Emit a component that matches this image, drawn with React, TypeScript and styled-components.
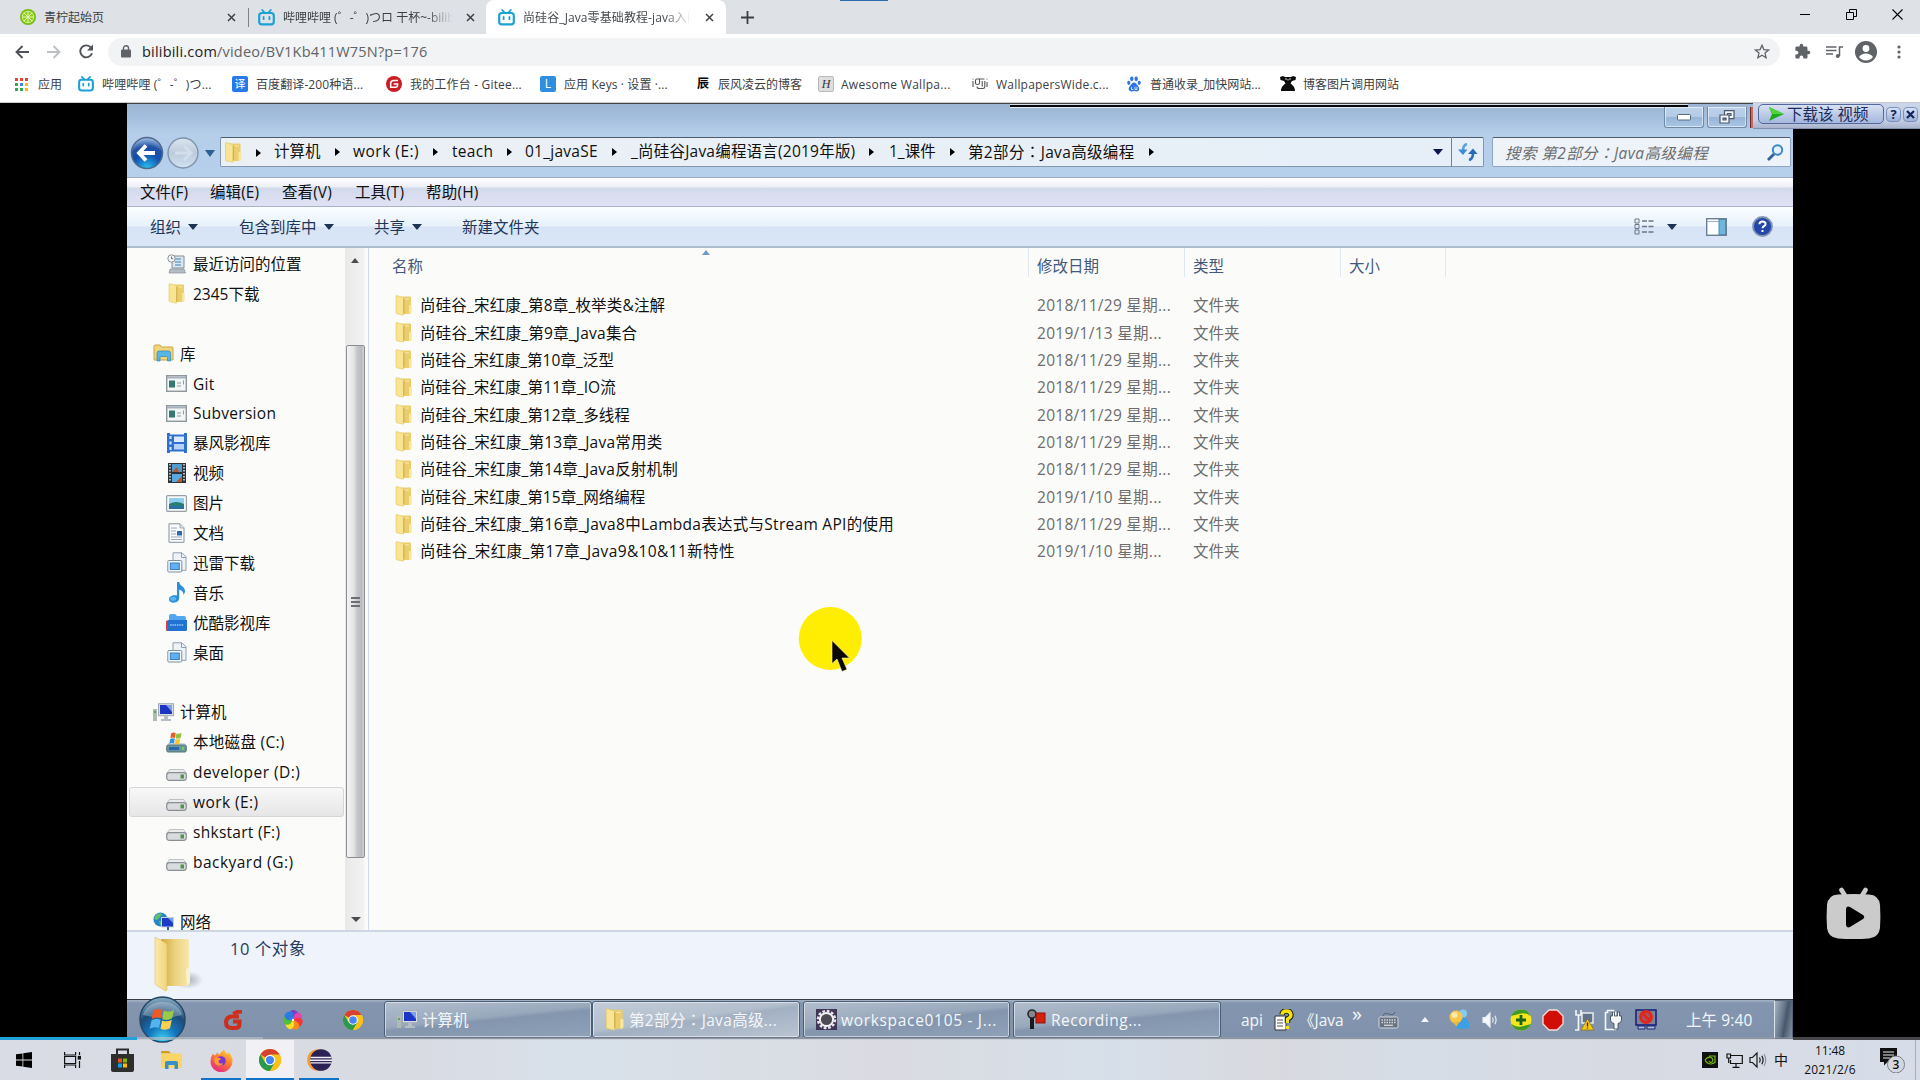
import React from "react";
import styled, { createGlobalStyle, css } from "styled-components";

const GlobalStyle = createGlobalStyle`
  * { box-sizing: border-box; }
  html, body { margin: 0; padding: 0; background: #000; overflow: hidden; }
  body { font-family: "Open Sans", "Noto Sans CJK SC", sans-serif; }
  svg { display: block; flex: none; }
`;

const Screen = styled.div`
  width: 1920px;
  height: 1080px;
  display: flex;
  flex-direction: column;
  overflow: hidden;
  background: #000;
`;

/* ---------- shared text cell ---------- */

const Cell = styled.span<{ w?: number; ls?: number }>`
  display: block;
  flex: none;
  white-space: nowrap;
  ${(p) => p.w !== undefined && css`width: ${p.w}px;`}
  letter-spacing: ${(p) => p.ls ?? 0}px;
`;

const IconCell = styled.span<{ w: number }>`
  display: flex;
  flex: none;
  align-items: center;
  width: ${(p) => p.w}px;
`;

/* the traditional face centres the full-width colon in its box */
const MidColon = styled.span`
  font-family: "Noto Sans CJK TC", sans-serif;
`;

const withColon = (s: string) => {
  const [a, b] = s.split("：");
  return b === undefined ? s : <span>{a}<MidColon lang="zh-TW">：</MidColon>{b}</span>;
};

/* ---------- browser chrome ---------- */

const TabStrip = styled.div`
  height: 34px;
  display: flex;
  background: #dee1e6;
  position: relative;
  flex: none;
`;

const TopMark = styled.div`
  position: absolute;
  left: 840px;
  top: 0;
  width: 48px;
  height: 1px;
  background: #2b6cb0;
`;

const Tab = styled.div<{ w: number; pad: number; active?: boolean; line?: boolean }>`
  width: ${(p) => p.w}px;
  height: 34px;
  padding-left: ${(p) => p.pad}px;
  display: flex;
  align-items: center;
  flex: none;
  font-size: 12px;
  color: #3c4043;
  position: relative;
  padding-bottom: 0;
  ${(p) =>
    p.active &&
    css`
      background: #fff;
      border-radius: 8px 8px 0 0;
      color: #45494d;
    `}
  ${(p) =>
    p.line &&
    css`
      &::after {
        content: "";
        position: absolute;
        right: 0;
        top: 8px;
        width: 1px;
        height: 19px;
        background: #808387;
      }
    `}
`;

const TabTitle = styled.div<{ fade?: boolean; w: number; ls?: number }>`
  width: ${(p) => p.w}px;
  margin-left: 8px;
  overflow: hidden;
  white-space: nowrap;
  letter-spacing: ${(p) => p.ls ?? 0}px;
  ${(p) =>
    p.fade &&
    css`
      mask-image: linear-gradient(90deg, #000 82%, transparent 97%);
    `}
`;

const NewTab = styled.div`
  width: 40px;
  padding-left: 15px;
  display: flex;
  align-items: center;
`;

const WindowButtons = styled.div`
  margin-left: auto;
  display: flex;
  height: 28px;
  align-items: center;
`;

const WinBtn = styled.div`
  width: 46px;
  display: flex;
  justify-content: center;
`;

const NavBar = styled.div`
  height: 35px;
  flex: none;
  display: flex;
  align-items: center;
  background: #fff;
`;

const NavIcon = styled.div<{ w: number }>`
  width: ${(p) => p.w}px;
  display: flex;
  justify-content: center;
`;

const Omnibox = styled.div`
  width: 1672px;
  height: 28px;
  border-radius: 14px;
  background: #f1f3f4;
  display: flex;
  align-items: center;
  padding: 0 10px 0 13px;
  font-size: 14.5px;
  color: #5f6368;
  letter-spacing: 0.2px;
`;

const Host = styled.b`
  font-weight: 400;
  color: #202124;
`;

const Url = styled.div`
  margin-left: 11px;
  flex: 1;
`;

const Bookmarks = styled.div`
  height: 34px;
  flex: none;
  display: flex;
  align-items: center;
  background: #fff;
  padding: 0 0 3px 15px;
  border-bottom: 1px solid #c9cbce;
  font-size: 12px;
  color: #3c4043;
`;

const Bookmark = styled.div<{ w: number; gap: number; ls?: number }>`
  width: ${(p) => p.w}px;
  flex: none;
  display: flex;
  align-items: center;
  gap: ${(p) => p.gap}px;
  white-space: nowrap;
  letter-spacing: ${(p) => p.ls ?? 0}px;
`;

const Tile = styled.span<{ bg: string; fg?: string; round?: boolean; size?: number; serif?: boolean }>`
  width: 16px;
  height: 16px;
  flex: none;
  display: flex;
  align-items: center;
  justify-content: center;
  background: ${(p) => p.bg};
  color: ${(p) => p.fg ?? "#fff"};
  border-radius: ${(p) => (p.round ? 8 : 2)}px;
  font-size: ${(p) => p.size ?? 11}px;
  line-height: 16px;
  letter-spacing: 0;
  ${(p) => p.serif && css`font-family: "Liberation Serif", serif; font-style: italic; border: 1px solid #bbb;`}
`;

/* ---------- video stage ---------- */

const Stage = styled.div`
  height: 937px;
  flex: none;
  padding-left: 127px;
  background: #000;
  position: relative;
`;

const Desktop = styled.div`
  width: 1666px;
  height: 937px;
  display: flex;
  flex-direction: column;
  font-size: 15.5px;
  line-height: 24px;
  color: #101010;
  background: #fbfcfa;
`;

const TitleArea = styled.div`
  height: 74px;
  flex: none;
  border-top: 1px solid #444;
  background: linear-gradient(180deg, #9db5d2 0, #a2bcdc 12px, #b5cfea 30px, #b6cfea 100%);
  position: relative;
  display: flex;
  align-items: flex-start;
  padding: 33px 2px 0 3px;
`;

const AddressBox = styled.div`
  width: 1264px;
  height: 30px;
  border: 1px solid #8296ad;
  border-top-color: #4f5c6b;
  border-radius: 2px;
  background: linear-gradient(90deg, #ebf0f5, #e6eff8);
  display: flex;
  align-items: center;
  padding-left: 4px;
`;

const NavButtons = styled.div`
  width: 90px;
  height: 32px;
  display: flex;
  align-items: center;
`;

const Crumb = styled.div<{ w: number; ls?: number }>`
  width: ${(p) => p.w}px;
  flex: none;
  display: flex;
  align-items: center;
  gap: 14px;
  white-space: nowrap;
  letter-spacing: ${(p) => p.ls ?? 0}px;
  padding-bottom: 2px;
`;

const CrumbArrow = styled.i`
  flex: none;
  border-left: 5px solid #000;
  border-top: 4.5px solid transparent;
  border-bottom: 4.5px solid transparent;
  position: relative;
  top: 1px;
`;

const Down = styled.i<{ c?: string; s?: number }>`
  flex: none;
  display: block;
  border-top: ${(p) => p.s ?? 6}px solid ${(p) => p.c ?? "#1c3452"};
  border-left: 5px solid transparent;
  border-right: 5px solid transparent;
`;

const Up = styled.i<{ c: string }>`
  display: block;
  border-bottom: 5px solid ${(p) => p.c};
  border-left: 4.5px solid transparent;
  border-right: 4.5px solid transparent;
`;

const RefreshBox = styled.div`
  width: 34px;
  height: 30px;
  border-left: 1px solid #6f8297;
  display: flex;
  align-items: center;
  justify-content: center;
  margin-left: 8px;
`;

const SearchBox = styled.div`
  width: 299px;
  height: 30px;
  margin-left: 8px;
  border: 1px solid #8ea6c0;
  border-top-color: #4f5c6b;
  border-radius: 2px;
  background: #edf3f8;
  display: flex;
  align-items: center;
  justify-content: space-between;
  padding: 0 6px 0 12px;
  color: #6a6d70;
  font-style: italic;
  letter-spacing: 0.42px;
`;

const CaptionButton = styled.div<{ x: number; w: number }>`
  position: absolute;
  left: ${(p) => p.x}px;
  top: 3px;
  width: ${(p) => p.w}px;
  height: 21px;
  border: 1px solid #6f89a8;
  border-top: none;
  border-radius: 0 0 3px 3px;
  box-shadow: inset 0 0 0 1px rgba(255, 255, 255, 0.55);
  background: linear-gradient(180deg, #bdd2ea 0, #b4cbe6 50%, #98b5d7 51%, #a9c6e6 100%);
  display: flex;
  align-items: center;
  justify-content: center;
`;

const RedEdge = styled.div`
  position: absolute;
  left: 1623px;
  top: 3px;
  width: 4px;
  height: 21px;
  background: #c9695f;
  border-left: 1px solid #6b2a26;
`;

const BlackStrip = styled.div`
  position: absolute;
  left: 883px;
  top: 0;
  width: 678px;
  height: 4px;
  background: #05070b;
  border-bottom: 1px solid #e8eef5;
  border-top: 1px solid #d5dde6;
`;

const MenuBar = styled.div`
  height: 30px;
  flex: none;
  display: flex;
  align-items: center;
  padding-left: 13px;
  border-top: 1px solid #98acc5;
  border-bottom: 1px solid #a9b3c6;
  background: linear-gradient(180deg, #fff 0, #eceff7 9px, #d3daeb 10px, #dfe2f4 100%);
`;

const ToolBar = styled.div`
  height: 41px;
  flex: none;
  display: flex;
  align-items: center;
  padding-left: 23px;
  border-bottom: 2px solid #adbdce;
  background: linear-gradient(180deg, #fbfeff 0, #e6f1fa 19px, #d7e4f5 20px, #dae6f6 100%);
  color: #1f3658;
`;

const ToolItem = styled.div<{ w: number }>`
  width: ${(p) => p.w}px;
  display: flex;
  align-items: center;
  gap: 7px;
`;

const Body = styled.div`
  height: 682px;
  flex: none;
  display: flex;
  overflow: hidden;
`;

const Tree = styled.div`
  width: 218px;
  flex: none;
  overflow: hidden;
  padding-top: 1px;
`;

const TreeRow = styled.div<{ level: number; selected?: boolean; ls?: number }>`
  height: 29.9px;
  margin: 0 1px 0 2px;
  padding-left: ${(p) => (p.level === 1 ? 23 : 36)}px;
  display: flex;
  align-items: center;
  gap: 6px;
  white-space: nowrap;
  border-radius: 3px;
  border: 1px solid transparent;
  letter-spacing: ${(p) => p.ls ?? 0}px;
  ${(p) =>
    p.selected &&
    css`
      border-color: #d5d6d8;
      background: linear-gradient(180deg, #f8f8f8, #e6e6e7);
    `}
`;

const TreeIcon = styled.span`
  width: 21px;
  display: flex;
  justify-content: center;
`;

const ScrollTrack = styled.div`
  width: 24px;
  flex: none;
  background: linear-gradient(90deg, #e9e9ea 0, #f2f2f2 19px, #fbfcfa 20px);
  border-right: 1px solid #cfdcee;
  display: flex;
  flex-direction: column;
  align-items: flex-start;
`;

const ScrollEnd = styled.div<{ h: number; top: number }>`
  height: ${(p) => p.h}px;
  padding: ${(p) => p.top}px 0 0 6px;
`;

const Thumb = styled.div`
  width: 19px;
  height: 513px;
  margin-left: 1px;
  border: 1px solid #8b8e92;
  border-radius: 2px;
  background: linear-gradient(90deg, #f4f4f4 0, #e3e3e4 40%, #c4c6c9 60%, #b9bbbf 85%, #d2d3d5 100%);
  display: flex;
  flex-direction: column;
  gap: 2px;
  align-items: center;
  justify-content: center;
`;

const Grip = styled.i`
  width: 9px;
  height: 2px;
  background: #6b6e72;
`;

const Files = styled.div`
  flex: 1;
  padding-left: 7px;
`;

const HeaderRow = styled.div`
  height: 43.5px;
  display: flex;
  color: #44597a;
  position: relative;
`;

const HeadCell = styled.div<{ w: number; pad: number; last?: boolean }>`
  width: ${(p) => p.w}px;
  height: 29px;
  flex: none;
  padding: 7px 0 0 ${(p) => p.pad}px;
  line-height: 22px;
  border-right: 1px solid #dfe8f2;
`;

const SortMark = styled.div`
  position: absolute;
  left: 326px;
  top: 2px;
`;

const FileRow = styled.div`
  height: 27.36px;
  display: flex;
  align-items: center;
  padding-left: 19px;
`;

const FileName = styled.div<{ ls: number }>`
  width: 617px;
  white-space: nowrap;
  letter-spacing: ${(p) => p.ls}px;
`;

const FileMeta = styled.div<{ w: number; ls?: number }>`
  width: ${(p) => p.w}px;
  color: #6d6d6d;
  white-space: nowrap;
  letter-spacing: ${(p) => p.ls ?? 0}px;
`;

const Details = styled.div`
  height: 69px;
  flex: none;
  border-top: 2px solid #cdd6e3;
  background: #eef3fc;
  display: flex;
  padding: 3px 0 0 26px;
  gap: 27px;
  color: #2b3d5c;
`;

const DetailsText = styled.div`
  padding-top: 2px;
  font-size: 16.5px;
  letter-spacing: 0.55px;
`;

const SevenBar = styled.div`
  height: 40px;
  flex: none;
  display: flex;
  align-items: center;
  border-top: 1px solid #333b45;
  background: linear-gradient(180deg, #a6b4c6 0, #8496af 3px, #8092ab 100%);
  color: #f4f7fa;
  position: relative;
`;

const QuickLaunch = styled.div`
  width: 257px;
  padding-left: 12px;
  display: flex;
  align-items: center;
`;

const TaskButton = styled.div<{ w: number; light?: boolean; gap?: number; ls?: number }>`
  width: ${(p) => p.w}px;
  height: 37px;
  flex: none;
  margin-right: ${(p) => p.gap ?? 0}px;
  letter-spacing: ${(p) => p.ls ?? 0}px;
  display: flex;
  align-items: center;
  gap: 4px;
  padding-left: 12px;
  white-space: nowrap;
  border: 1px solid #4d5f77;
  border-radius: 3px;
  box-shadow: inset 0 0 0 1px rgba(255, 255, 255, 0.5);
  background: ${(p) =>
    p.light
      ? "linear-gradient(172deg, #c3ccd8 0, #b3bfcd 45%, #a2b0c2 52%, #b9c4d1 100%)"
      : "linear-gradient(174deg, #b2becd 0, #98a8bc 45%, #8496ae 52%, #8fa1b9 100%)"};
`;

const Tray = styled.div`
  display: flex;
  align-items: center;
  padding-left: 20px;
  flex: 1;
`;

const ClippedLabel = styled(Cell)`
  overflow: hidden;
  text-indent: -7px;
`;

const Chevron = styled(Cell)`
  font-size: 20px;
  padding-bottom: 12px;
`;

const ShowDesktop = styled.div`
  width: 19px;
  height: 39px;
  margin-left: auto;
  border: 1px solid #55657a;
  border-left-color: #dbe2ea;
  background: linear-gradient(100deg, #a7b2bf 0, #65758a 45%, #47566a 60%, #8593a6 100%);
`;

const Spotlight = styled.div`
  position: absolute;
  left: 798px;
  top: 503px;
`;

const DownloadBar = styled.div`
  position: absolute;
  left: 1753px;
  top: 0;
  width: 167px;
  height: 26px;
  display: flex;
  align-items: center;
  gap: 2px;
  padding: 0 1px 3px 5px;
  background: linear-gradient(180deg, #ccd6ea 0, #c4cfe6 70%, #a9b4cc 100%);
  border-bottom: 1px solid #8390ac;
`;

const DownloadButton = styled.div`
  width: 126px;
  height: 20px;
  border: 1px solid #53689b;
  border-radius: 5px;
  display: flex;
  align-items: center;
  gap: 3px;
  padding-left: 10px;
  background: linear-gradient(180deg, #d8e1f2, #a5b7dd);
  color: #1d2c5e;
  font-size: 15.5px;
  line-height: 18px;
  white-space: nowrap;
`;

const MiniButton = styled.div`
  width: 15px;
  height: 15px;
  border-radius: 4px;
  background: linear-gradient(180deg, #d6e2f6, #9db1d8);
  border: 1px solid #7d90bb;
  display: flex;
  align-items: center;
  justify-content: center;
  color: #14235a;
  font-weight: 700;
  font-size: 13px;
  line-height: 13px;
`;

const BiliBadge = styled.div`
  position: absolute;
  left: 1826px;
  top: 784px;
`;

const Progress = styled.div`
  position: absolute;
  left: 0;
  bottom: 0;
  width: 1920px;
  height: 3px;
  display: flex;
  background: rgba(150, 155, 165, 0.45);
`;

const ProgressPart = styled.div<{ w: number; c: string }>`
  width: ${(p) => p.w}px;
  background: ${(p) => p.c};
`;

/* ---------- Windows 10 taskbar ---------- */

const TenBar = styled.div`
  height: 40px;
  flex: none;
  display: flex;
  background: linear-gradient(90deg, #dadce5 0, #d9dbe3 22%, #d8e1ea 30%, #dadbe1 46%, #d6dfe9 58%, #d9d9df 66%, #d5dde6 73%, #d8dae3 85%, #d6dde8 100%);
`;

const TenApp = styled.div<{ w: number; active?: boolean; gap?: number }>`
  width: ${(p) => p.w}px;
  height: 40px;
  display: flex;
  align-items: center;
  justify-content: center;
  margin-right: ${(p) => p.gap ?? 0}px;
  ${(p) => p.active && css`background: #f0f0f5;`}
`;

const Running = styled(TenApp)`
  border-bottom: 2px solid #1173c7;
  padding-top: 2px;
  margin-right: 5px;
`;

const TenTray = styled.div`
  margin-left: auto;
  display: flex;
  align-items: center;
  color: #111;
  font-size: 12px;
`;

const Clock = styled.div`
  width: 72px;
  margin: 0 14px 0 -5px;
  text-align: center;
  line-height: 19px;
`;

const DateLine = styled.div`
  letter-spacing: 0.2px;
`;

const TimeLine = styled.div`
  letter-spacing: -0.1px;
`;

const Notice = styled.div`
  width: 35px;
`;

const PeekLine = styled.div`
  width: 5px;
  height: 40px;
  border-left: 1px solid #a9adb6;
`;

const ImeLabel = styled.span`
  width: 25px;
  font-size: 14px;
  line-height: 20px;
`;

/* ---------- icons ---------- */

const Close = () => (
  <svg width="9" height="9" viewBox="0 0 9 9"><path d="M1 1l7 7M8 1L1 8" stroke="#3c4043" strokeWidth="1.5" /></svg>
);

const BiliTv = ({ size = 17 }: { size?: number }) => (
  <svg width={size} height={size} viewBox="0 0 17 17" fill="none" stroke="#1ca1d4">
    <rect x="1.2" y="4" width="14.6" height="11.4" rx="2.6" strokeWidth="2.2" />
    <path d="M4.2 1l2.4 2.6M12.8 1l-2.4 2.6" strokeWidth="1.8" strokeLinecap="round" />
    <path d="M5.6 8v2.2M11.4 8v2.2" strokeWidth="1.8" strokeLinecap="round" />
  </svg>
);

const Lime = () => (
  <svg width="16" height="16" viewBox="0 0 16 16">
    <circle cx="8" cy="8" r="8" fill="#73bd12" />
    <circle cx="8" cy="8" r="6.2" fill="#d7f08b" />
    <circle cx="8" cy="8" r="5.4" fill="#8ed01f" />
    <path d="M8 2v12M2 8h12M3.8 3.8l8.4 8.4M12.2 3.8l-8.4 8.4" stroke="#e6f8b4" strokeWidth="1" />
  </svg>
);

const Apps = () => (
  <svg width="13" height="13" viewBox="0 0 13 13">
    {["#ea4335", "#ea4335", "#ea4335", "#34a853", "#4285f4", "#fbbc05", "#34a853", "#34a853", "#fbbc05"].map((c, i) => (
      <rect key={i} x={(i % 3) * 5} y={Math.floor(i / 3) * 5} width="3" height="3" fill={c} />
    ))}
  </svg>
);

const Gitee = () => (
  <svg width="16" height="16" viewBox="0 0 16 16">
    <circle cx="8" cy="8" r="8" fill="#c71d23" />
    <path d="M12 4.6H7.4a2.7 2.7 0 0 0-2.7 2.7v4h4.6a2.3 2.3 0 0 0 2.3-2.3v-.9H7.6" fill="none" stroke="#fff" strokeWidth="1.5" />
  </svg>
);

const Paw = () => (
  <svg width="14" height="16" viewBox="0 0 14 16" fill="#2f74e0">
    <ellipse cx="4.8" cy="2.8" rx="1.7" ry="2.4" />
    <ellipse cx="9.2" cy="2.8" rx="1.7" ry="2.4" />
    <ellipse cx="1.8" cy="6.8" rx="1.6" ry="2.1" />
    <ellipse cx="12.2" cy="6.8" rx="1.6" ry="2.1" />
    <path d="M7 6.6c2 0 2.6 2 4.2 3.6 2 2 1.200 5.200-1.600 5.200-1 0-1.600-.4-2.600-.4s-1.600.4-2.600.4c-2.800 0-3.600-3.200-1.600-5.200C4.400 8.600 5 6.600 7 6.600z" />
    <path d="M4.500 11v2.500h1.800M8 10.800v2.700h2v-2.700" stroke="#fff" strokeWidth=".8" fill="none" />
  </svg>
);

const WideMark = () => (
  <svg width="16" height="12" viewBox="0 0 16 12" fill="none" stroke="#555" strokeWidth="1.100">
    <path d="M1 3v6M1 .8v.6M3.500 6V2.500q0-1.500 1.500-1.500h7.500M7.500 1v4q0 1.500-2 1.500T3.500 5M5 8.500q0 2 2 2h4q1.800 0 1.800-2V3M10.200 3v5.500M15 4v5M15 .8v.6" />
  </svg>
);

const BlackFigure = () => (
  <svg width="16" height="16" viewBox="0 0 16 16">
    <path d="M0 1l3-1 2 1h6l2-1 3 1-.5 3-3.500 1-1.500 2.500c2 1.500 4.500 3.500 4.500 7.500H1c0-4 2.500-6 4.500-7.500L4 5 .5 4z" fill="#0b0b0b" />
    <path d="M5 3h2M9 3h2M8 3v1.500" stroke="#fff" strokeWidth=".8" />
  </svg>
);

const FolderIcon = ({ w = 18, h = 21 }: { w?: number; h?: number }) => (
  <svg width={w} height={h} viewBox="0 0 17 21">
    <path d="M5 1.500h9.500q1 0 1 1V18q0 1-1 1H5z" fill="#ebce6a" />
    <path d="M13.500 10h2.700v7.500l-1.500 1.500h-1.200z" fill="#f6e7a4" />
    <path d="M.5 1.200q0-.7.800-.6L7.500 2.500q.8.300.8 1v15.800q0 1-.9.900L1.300 18.700Q.5 18.500.5 17.800z" fill="#f8e492" stroke="#e0c468" strokeWidth=".6" />
    <path d="M8.300 4v14.500" stroke="#c4a03c" strokeWidth=".8" />
    <path d="M10 4h3.500" stroke="#f8ebb0" />
  </svg>
);

const RecentIcon = () => (
  <svg width="19" height="20" viewBox="0 0 19 20">
    <path d="M5 2h12v12H5z" fill="#dce6ee" stroke="#7f8c99" />
    <path d="M8 5h6M8 8h6M8 11h6" stroke="#6fa3c8" strokeWidth="1.300" />
    <path d="M3 15h14l1.500 4H2z" fill="#b5bdc5" stroke="#858e97" strokeWidth=".7" />
    <circle cx="4.500" cy="4.500" r="3.700" fill="#f4f7f9" stroke="#8c9399" />
    <path d="M4.500 2.500v2.200h1.800" stroke="#555" fill="none" strokeWidth=".8" />
  </svg>
);

const LibraryIcon = () => (
  <svg width="21" height="19" viewBox="0 0 21 19">
    <path d="M1 2q0-1 1-1h5l1.500 2H19q1 0 1 1v12H1z" fill="#f0d67a" stroke="#c8a548" />
    <path d="M4 17V9q0-2 2-2h9.500q2 0 2 2v8h-3v-3.500q0-1-1-1H8q-1 0-1 1V17z" fill="#58b6e6" stroke="#2f86bf" strokeWidth=".7" />
  </svg>
);

const WindowIcon = () => (
  <svg width="21" height="17" viewBox="0 0 21 17">
    <rect x=".7" y=".7" width="19.600" height="15.600" fill="#f4f6f6" stroke="#8f979e" strokeWidth="1.400" />
    <path d="M1 2.500h19" stroke="#a7b1bb" strokeWidth="2" />
    <rect x="3" y="5.500" width="6" height="7" fill="#35786f" />
    <path d="M11 8h4M11 11h4M17.500 5.500v4" stroke="#8a9ba5" />
  </svg>
);

const BaofengIcon = () => (
  <svg width="20" height="20" viewBox="0 0 20 20">
    <path d="M0 0h3v1.500h14V0h3v20h-3v-1.500H3V20H0z" fill="#2e6fd0" />
    <rect x="7" y="3.500" width="10" height="5.500" fill="#dcebff" />
    <rect x="7" y="11" width="10" height="5.500" fill="#b5d3fb" />
    <path d="M3.500 3v15" stroke="#cfe2ff" strokeWidth="2.200" strokeDasharray="3 2.500" />
  </svg>
);

const VideoIcon = () => (
  <svg width="18" height="20" viewBox="0 0 18 20">
    <rect width="18" height="20" fill="#2e3338" />
    <rect x="4" y="1" width="10" height="8" fill="#4d9dd2" />
    <rect x="4" y="11" width="10" height="8" fill="#58a9dd" />
    <path d="M4 9l5-5 2 5zM8 19l6-6v6z" fill="#b25a34" />
    <path d="M2 1v18M16 1v18" stroke="#e6e6e6" strokeWidth="1.500" strokeDasharray="1.500 1.500" />
  </svg>
);

const PictureIcon = () => (
  <svg width="21" height="17" viewBox="0 0 21 17">
    <rect x=".6" y=".6" width="19.800" height="15.800" rx="1" fill="#f8fafb" stroke="#959fa8" strokeWidth="1.200" />
    <rect x="3" y="3" width="15" height="11" fill="#8fd0ef" />
    <path d="M3 9q7-4 15 0v5H3z" fill="#2b7c74" />
    <path d="M3 11h15v3H3z" fill="#2c70a0" />
  </svg>
);

const DocIcon = () => (
  <svg width="17" height="20" viewBox="0 0 17 20">
    <path d="M1 .8h11l4 4v14.500H1z" fill="#fafbfc" stroke="#87919b" />
    <path d="M12 1v4h4" fill="#dde3e8" stroke="#87919b" strokeWidth=".7" />
    <path d="M3 5h6M3 8h5M3 11h5M3 14h11M3 16.500h11" stroke="#9aa9b8" />
    <rect x="9" y="8" width="5" height="4.500" fill="#2e68ad" />
  </svg>
);

const DownloadDoc = () => (
  <svg width="20" height="21" viewBox="0 0 20 21">
    <path d="M6 .8h9l4 4v13.500H6z" fill="#eff3f7" stroke="#8e9fb0" />
    <path d="M14.500 1v4.500H19" fill="none" stroke="#8e9fb0" />
    <rect x=".8" y="8.500" width="14" height="11.500" rx="1" fill="#f5f9fc" stroke="#7b91a8" />
    <rect x="3.300" y="11" width="9" height="6.500" fill="#5fb0f0" stroke="#3b7fc0" />
  </svg>
);

const MusicIcon = () => (
  <svg width="18" height="21" viewBox="0 0 18 21">
    <path d="M9 0h2.200c.4 4 5.800 4.500 5.800 9 0 1.800-.8 3-1.600 3.800.3-3-2-4.600-4.200-5V16c0 2.800-2.700 4.700-5.600 4.700C3 20.700 1 19.400 1 17.300c0-2.600 3-4.600 8-3.800z" fill="#2b8fdb" />
    <ellipse cx="5.200" cy="16.800" rx="3" ry="2" fill="#5cb6f1" />
  </svg>
);

const YoukuIcon = () => (
  <svg width="21" height="17" viewBox="0 0 21 17">
    <path d="M0 7l5-2v12H1q-1 0-1-1z" fill="#d8434a" />
    <path d="M3 2q0-2 2-2h4l2 2h7q2 0 2 2v6H3z" fill="#52a7ee" />
    <path d="M1.500 8q0-2 2-2H21v9.500q0 1.500-1.500 1.500h-18z" fill="#2173d2" />
    <path d="M4 11h14" stroke="#9dc8f5" strokeWidth="1.500" strokeDasharray="1.500 .8" />
  </svg>
);

const ComputerIcon = () => (
  <svg width="21" height="19" viewBox="0 0 21 19">
    <rect x="0" y="6" width="4" height="12" fill="#aebbb0" />
    <rect x="1" y="8" width="2" height="2" fill="#58a54c" />
    <rect x="5.500" y=".7" width="15" height="12" fill="#d7dde2" stroke="#a2abb3" />
    <rect x="7" y="2" width="12" height="9" fill="#1b34c4" />
    <path d="M13 2h6v7z" fill="#7d9df0" />
    <path d="M11 13h4v3h3v2H8v-2h3z" fill="#b5bec6" />
  </svg>
);

const SystemDisk = () => (
  <svg width="21" height="21" viewBox="0 0 21 21">
    <path d="M2.500 11h16l2 3H.5z" fill="#cfd8da" />
    <rect x=".7" y="13" width="19.600" height="7" rx="1.500" fill="#6d949d" stroke="#56767e" />
    <rect x="3" y="15" width="10" height="3" fill="#2869a9" />
    <rect x="16" y="15" width="2" height="3" fill="#6ed44a" />
    <g transform="translate(3 0) scale(.7)">
      <path d="M3 2q3-2 6.500-.5L8.500 8.500Q5 7 2 9z" fill="#ee5a24" />
      <path d="M10.500 2Q14 3.500 18 1.500L16.500 8.500Q13 10.500 9.500 9z" fill="#8cc63e" />
      <path d="M1.800 10Q5 8 8.300 9.600L7.200 16.500Q4 15 .5 17z" fill="#2d93e0" />
      <path d="M9.300 10Q13 11.500 16.300 9.500L15 16.600Q12 18.500 8.200 17z" fill="#fdc52c" />
    </g>
  </svg>
);

const DiskIcon = () => (
  <svg width="21" height="18" viewBox="0 0 21 18">
    <path d="M3.500 6.500h14l3 4H.8z" fill="#e9ebed" stroke="#a9adb1" strokeWidth=".7" />
    <rect x=".7" y="9.700" width="19.600" height="7.600" rx="2.500" fill="#d9dbde" stroke="#8a8f93" strokeWidth="1.200" />
    <rect x="14.500" y="11.500" width="3.500" height="4" fill="#4f9448" />
  </svg>
);

const NetworkIcon = () => (
  <svg width="21" height="19" viewBox="0 0 21 19">
    <circle cx="7.500" cy="7.500" r="7" fill="#2587c8" />
    <path d="M3 3q4-3 6-1L7 5 4 8 1 7zM6 9l4 1-2 4z" fill="#66c06a" />
    <rect x="8.500" y="5.500" width="12" height="9.500" fill="#1f3bc6" stroke="#c8d0d8" />
    <path d="M15 6h5v5z" fill="#7a98ec" />
    <path d="M14 15h2v3h-2z" fill="#2e5cad" />
  </svg>
);

const BigFolder = () => (
  <svg width="50" height="58" viewBox="0 0 50 58">
    <defs>
      <linearGradient id="bf" x1="0" x2="1"><stop offset="0" stopColor="#fbeaa9" /><stop offset="1" stopColor="#efd47c" /></linearGradient>
      <linearGradient id="bb" x1="0" x2="1"><stop offset="0" stopColor="#cfa740" /><stop offset=".5" stopColor="#ecd27e" /><stop offset="1" stopColor="#f7e7ad" /></linearGradient>
      <radialGradient id="bs"><stop offset="0" stopColor="#7d8590" stopOpacity=".6" /><stop offset="1" stopColor="#7d8590" stopOpacity="0" /></radialGradient>
    </defs>
    <ellipse cx="35" cy="45" rx="15" ry="9" fill="url(#bs)" />
    <path d="M8 4h26q2 0 2 2v43q0 2-2 2H13z" fill="url(#bb)" />
    <path d="M33 34q3-3 4 0v14l-3 2.500z" fill="#fbf2cc" />
    <path d="M2 2l10.500 6q1.500 1 1.500 3v43q0 2.500-2 1.800L3 50q-1-.7-1-2z" fill="url(#bf)" stroke="#e0c263" strokeWidth=".6" />
  </svg>
);

const Orb = () => (
  <svg width="47" height="47" viewBox="0 0 47 47">
    <defs>
      <radialGradient id="orb" cx=".5" cy=".95" r=".9">
        <stop offset="0" stopColor="#3fd2f5" /><stop offset=".35" stopColor="#1377bd" /><stop offset=".7" stopColor="#1d4a78" /><stop offset="1" stopColor="#7fa3bb" />
      </radialGradient>
    </defs>
    <circle cx="23.500" cy="23.500" r="22.500" fill="url(#orb)" stroke="#244765" strokeWidth="1.500" />
    <path d="M4 19a20 17 0 0 1 39 0q-19 5-39 0z" fill="#fff" opacity=".28" />
    <g transform="translate(10 9) scale(1.400)">
      <path d="M3 4q3-2 6.500-.5L8.500 9.500Q5 8 2 10z" fill="#ee5a24" />
      <path d="M10.500 4Q14 5.500 18 3.500L16.500 9.500Q13 11.500 9.500 10z" fill="#9bcb46" />
      <path d="M1.800 11Q5 9 8.300 10.600L7.200 16.500Q4 15 .5 17z" fill="#53b4ef" />
      <path d="M9.300 11Q13 12.500 16.300 10.500L15 16.600Q12 18.500 8.200 17z" fill="#fdd14e" />
    </g>
  </svg>
);

const OrbSlot = styled.div`
  width: 47px;
  height: 39px;
  display: flex;
  align-items: center;
  margin-right: 38px;
`;

const RedG = () => (
  <svg width="19" height="20" viewBox="0 0 19 20" fill="none" stroke="#cc2f1d" strokeWidth="4">
    <path d="M18 1.500Q12 1.500 9.500 4M15 6.500H8Q2 7 2 12.500T8 18h3q4.500 0 4.500-4v-2.500H9" />
  </svg>
);

const Pinwheel = () => (
  <svg width="20" height="20" viewBox="0 0 20 20">
    {["#7d3cc9", "#e344ad", "#f3353a", "#fb8a1c", "#f7e02a", "#4fbe3b", "#2a7ae4"].map((c, i) => (
      <path key={c} d="M10 10Q3 6 7 .5q6-1.500 8 4z" fill={c} transform={`rotate(${i * 51.4 + 10} 10 10)`} />
    ))}
    <circle cx="10" cy="10" r="1.200" fill="#fff" />
  </svg>
);

const Chrome = ({ s }: { s: number }) => (
  <svg width={s} height={s} viewBox="0 0 24 24">
    <circle cx="12" cy="12" r="12" fill="#fbc116" />
    <path d="M12 12L1.600 6A12 12 0 0 1 22.400 6z" fill="#d8402f" />
    <path d="M1.600 6A12 12 0 0 0 12 24l5.200-9L12 12 6.800 15z" fill="#279a4c" />
    <path d="M12 6h10.400A12 12 0 0 1 12 24l5.200-9z" fill="#fbc116" />
    <circle cx="12" cy="12" r="5.700" fill="#fff" />
    <circle cx="12" cy="12" r="4.500" fill="#4285f4" />
  </svg>
);

const Gear = () => (
  <svg width="21" height="21" viewBox="0 0 21 21">
    <rect width="21" height="21" fill="#3e3557" />
    <circle cx="10.500" cy="10.500" r="8.500" fill="none" stroke="#e8e6ea" strokeWidth="2.500" strokeDasharray="2.700 1.750" />
    <circle cx="10.500" cy="10.500" r="6.600" fill="#4c4a52" stroke="#f3f1f5" strokeWidth="2" />
  </svg>
);

const Recorder = () => (
  <svg width="21" height="21" viewBox="0 0 21 21">
    <circle cx="6" cy="5" r="4" fill="#85878b" stroke="#25282c" strokeWidth="1.600" />
    <path d="M6 9v11" stroke="#181a1d" strokeWidth="4" />
    <rect x="10" y="4" width="9" height="10" fill="#d6200e" stroke="#8c1409" />
  </svg>
);

const HelpNote = () => (
  <svg width="20" height="22" viewBox="0 0 20 22">
    <path d="M1 7h11v14H1z" fill="#fff" stroke="#333" />
    <path d="M3 11h6M3 14h6M3 17h6" stroke="#555" />
    <path d="M8 5.500Q8.500 2 12.500 2T17 6q0 2.500-3.500 4v4" fill="none" stroke="#222" strokeWidth="5.500" />
    <path d="M8 5.500Q8.500 2 12.500 2T17 6q0 2.500-3.500 4v4M13.500 17v3" fill="none" stroke="#f5e500" strokeWidth="3.300" />
  </svg>
);

const Keyboard = () => (
  <svg width="21" height="18" viewBox="0 0 21 18" fill="none" stroke="#d3d8de">
    <path d="M5 5Q6 1 11 3t6-2" stroke="#59616c" />
    <rect x="1" y="6" width="19" height="11" rx="1.500" fill="#69737f" />
    <path d="M3.500 9h14M3.500 11.500h14" strokeWidth="1.400" strokeDasharray="1.500 1" />
    <path d="M6 14.300h9" strokeWidth="1.300" />
  </svg>
);

const PeopleIcon = () => (
  <svg width="20" height="21" viewBox="0 0 20 21">
    <circle cx="14" cy="4.500" r="4" fill="#86caf3" />
    <path d="M7 19q0-10 7-10t6 10q-6 2-13 0z" fill="#3d9fe4" />
    <circle cx="7" cy="8" r="6.500" fill="#f9c645" />
    <circle cx="5.500" cy="6" r="3" fill="#fdeaa8" />
    <path d="M4 13.500l3.500 4 3-5z" fill="#f0b534" />
  </svg>
);

const Speaker = ({ dark }: { dark?: boolean }) => (
  <svg width="18" height="18" viewBox="0 0 18 18" fill="none" stroke={dark ? "#1a1a1a" : "#e8edf2"} strokeWidth="1.200">
    <path d="M1 6.500h2.500L8 2v14l-4.500-4.500H1z" fill={dark ? "none" : "#f6f8fa"} />
    <path d="M10.500 6.500q1.500 2.500 0 5" />
    <path d="M12.800 4.800q2.600 4.200 0 8.400" />
    {dark && <path d="M15 3q3.500 6 0 12" stroke="#8d929b" />}
  </svg>
);

const GreenPlus = () => (
  <svg width="22" height="22" viewBox="0 0 22 22">
    <circle cx="11" cy="11" r="10.500" fill="#f5e51b" />
    <path d="M1 7Q4 .5 11 .5T20.500 7Q16 3.500 11 4.500T1 7z" fill="#3f9b28" />
    <path d="M21 15q-3 6.500-10 6.500T1.500 15Q6 18.500 11 17.500T21 15z" fill="#3f9b28" />
    <path d="M11 6v10M6 11h10" stroke="#17641b" strokeWidth="2.800" />
  </svg>
);

const Octagon = () => (
  <svg width="22" height="22" viewBox="0 0 22 22">
    <path d="M7 1h8l6 6v8l-6 6H7l-6-6V7z" fill="#d10d05" stroke="#f3dedc" strokeWidth="1.300" />
  </svg>
);

const NetWarn = () => (
  <svg width="21" height="22" viewBox="0 0 21 22">
    <path d="M2 1v5h5V1M4.500 6v15H1" fill="none" stroke="#f2f4f6" strokeWidth="1.700" />
    <rect x="8" y="4" width="11" height="10" fill="#5f7287" stroke="#f2f4f6" strokeWidth="1.400" />
    <path d="M13.500 10l6.500 11H7z" fill="#f7c81c" stroke="#8e6b08" strokeWidth=".7" />
    <path d="M13.500 13.500v4M13.500 18.500v1" stroke="#4a3802" strokeWidth="1.400" />
  </svg>
);

const Battery = () => (
  <svg width="20" height="22" viewBox="0 0 20 22">
    <path d="M1.500 3.500h2V1.500h6v2h2v17h-10z" fill="none" stroke="#f4f6f8" strokeWidth="1.600" />
    <path d="M8.500 3v4h-2v4q0 3 3.500 3.500V20h4v-5.500q3.500-.5 3.500-3.500V7h-2V3h-2v4h-3V3z" fill="#f4f6f8" stroke="#35404d" strokeWidth=".8" />
  </svg>
);

const Blocked = () => (
  <svg width="22" height="22" viewBox="0 0 22 22">
    <rect x="1" y="1" width="20" height="15" fill="#7c8495" stroke="#19247d" strokeWidth="1.600" />
    <path d="M3 17h7v3H3zM12 17h8v3h-8z" fill="#aebcca" stroke="#19247d" />
    <circle cx="11" cy="8" r="5.500" fill="#a9545a" stroke="#e3251d" strokeWidth="2.800" />
    <path d="M7 4l8 8" stroke="#e3251d" strokeWidth="2.800" />
  </svg>
);

const BackIcon = () => (
  <svg width="34" height="34" viewBox="0 0 34 34">
    <defs>
      <radialGradient id="bk" cx=".5" cy="1" r=".95"><stop offset="0" stopColor="#29c3f3" /><stop offset=".5" stopColor="#124fae" /><stop offset=".75" stopColor="#2152a5" /><stop offset="1" stopColor="#90b2dc" /></radialGradient>
    </defs>
    <circle cx="17" cy="17" r="15.500" fill="url(#bk)" stroke="#50698c" strokeWidth="1.500" />
    <path d="M16 9.500L9 17l7 7.500M9.500 17H25" fill="none" stroke="#fff" strokeWidth="3.800" />
  </svg>
);

const ForwardIcon = () => (
  <svg width="34" height="34" viewBox="0 0 34 34">
    <defs>
      <linearGradient id="fw" x2="0" y2="1"><stop offset="0" stopColor="#dbe5ef" /><stop offset=".5" stopColor="#bccbdc" /><stop offset="1" stopColor="#d3e2f1" /></linearGradient>
    </defs>
    <circle cx="17" cy="17" r="15" fill="url(#fw)" stroke="#7f93ab" strokeWidth="1.400" />
    <path d="M18 10l7 7-7 7M24.500 17H9" fill="none" stroke="#d3deea" strokeWidth="3" />
  </svg>
);

/* ---------- data ---------- */

type Node = { label: string; level: number; icon?: React.ReactNode; selected?: boolean; ls?: number };

const tree: Node[] = [
  { label: "最近访问的位置", level: 2, icon: <RecentIcon /> },
  { label: "2345下载", level: 2, icon: <FolderIcon /> },
  { label: "", level: 2 },
  { label: "库", level: 1, icon: <LibraryIcon /> },
  { label: "Git", level: 2, icon: <WindowIcon />, ls: 0.3 },
  { label: "Subversion", level: 2, icon: <WindowIcon />, ls: 0.28 },
  { label: "暴风影视库", level: 2, icon: <BaofengIcon /> },
  { label: "视频", level: 2, icon: <VideoIcon /> },
  { label: "图片", level: 2, icon: <PictureIcon /> },
  { label: "文档", level: 2, icon: <DocIcon /> },
  { label: "迅雷下载", level: 2, icon: <DownloadDoc /> },
  { label: "音乐", level: 2, icon: <MusicIcon /> },
  { label: "优酷影视库", level: 2, icon: <YoukuIcon /> },
  { label: "桌面", level: 2, icon: <DownloadDoc /> },
  { label: "", level: 2 },
  { label: "计算机", level: 1, icon: <ComputerIcon /> },
  { label: "本地磁盘 (C:)", level: 2, icon: <SystemDisk />, ls: 0.3 },
  { label: "developer (D:)", level: 2, icon: <DiskIcon />, ls: 0.45 },
  { label: "work (E:)", level: 2, icon: <DiskIcon />, selected: true, ls: 0.42 },
  { label: "shkstart (F:)", level: 2, icon: <DiskIcon />, ls: 0.28 },
  { label: "backyard (G:)", level: 2, icon: <DiskIcon />, ls: 0.47 },
  { label: "", level: 2 },
  { label: "网络", level: 1, icon: <NetworkIcon /> },
];

const files: [string, string, number][] = [
  ["尚硅谷_宋红康_第8章_枚举类&注解", "2018/11/29 星期...", 0.18],
  ["尚硅谷_宋红康_第9章_Java集合", "2019/1/13 星期...", 0.22],
  ["尚硅谷_宋红康_第10章_泛型", "2018/11/29 星期...", 0.06],
  ["尚硅谷_宋红康_第11章_IO流", "2018/11/29 星期...", 0.12],
  ["尚硅谷_宋红康_第12章_多线程", "2018/11/29 星期...", 0.08],
  ["尚硅谷_宋红康_第13章_Java常用类", "2018/11/29 星期...", 0.24],
  ["尚硅谷_宋红康_第14章_Java反射机制", "2018/11/29 星期...", 0.23],
  ["尚硅谷_宋红康_第15章_网络编程", "2019/1/10 星期...", 0.08],
  ["尚硅谷_宋红康_第16章_Java8中Lambda表达式与Stream API的使用", "2018/11/29 星期...", 0.28],
  ["尚硅谷_宋红康_第17章_Java9&10&11新特性", "2019/1/10 星期...", 0.38],
];

const crumbs: { label: string; w: number; ls: number }[] = [
  { label: "计算机", w: 79, ls: 0 },
  { label: "work (E:)", w: 99, ls: 0.5 },
  { label: "teach", w: 73, ls: 0.3 },
  { label: "01_javaSE", w: 106, ls: 0.25 },
  { label: "_尚硅谷Java编程语言(2019年版)", w: 258, ls: 0.22 },
  { label: "1_课件", w: 79, ls: 0 },
  { label: "第2部分：Java高级编程", w: 190, ls: 0.35 },
];

/* ---------- sections ---------- */

const BrowserChrome = () => (
  <>
    <TabStrip>
      <TopMark />
      <Tab w={249} pad={20} line>
        <Lime /><TabTitle w={183}>青柠起始页</TabTitle><Close />
      </Tab>
      <Tab w={237} pad={9}>
        <BiliTv /><TabTitle w={175} fade>哔哩哔哩 (゜-゜)つロ 干杯~-bilibili</TabTitle>
        <IconCell w={8} />
        <Close />
      </Tab>
      <Tab w={240} pad={12} active>
        <BiliTv /><TabTitle w={173} fade ls={0.1}>尚硅谷_Java零基础教程-java入门</TabTitle>
        <IconCell w={9} />
        <Close />
      </Tab>
      <NewTab>
        <svg width="13" height="13" viewBox="0 0 13 13"><path d="M6.500 0v13M0 6.500h13" stroke="#3c4043" strokeWidth="1.800" /></svg>
      </NewTab>
      <WindowButtons>
        <WinBtn><svg width="10" height="10"><path d="M0 5.500h10" stroke="#000" /></svg></WinBtn>
        <WinBtn><svg width="11" height="11" fill="none" stroke="#000"><path d="M.5 3.500h7v7h-7zM3.500 3V.5h7v7H8" /></svg></WinBtn>
        <WinBtn><svg width="11" height="11"><path d="M.5.500l10 10M10.500.500l-10 10" stroke="#000" strokeWidth="1.100" /></svg></WinBtn>
      </WindowButtons>
    </TabStrip>
    <NavBar>
      <NavIcon w={43}><svg width="14" height="14" fill="none" stroke="#4f5357" strokeWidth="1.900"><path d="M14 7H1.500M7.500 1L1.500 7l6 6" /></svg></NavIcon>
      <NavIcon w={22}><svg width="14" height="14" fill="none" stroke="#bcbfc3" strokeWidth="1.900"><path d="M0 7h12.500M6.500 1l6 6-6 6" /></svg></NavIcon>
      <NavIcon w={43}>
        <svg width="15" height="15" viewBox="0 0 15 15" fill="none" stroke="#4f5357" strokeWidth="1.900"><path d="M13 9.300A6 6 0 1 1 12 3.600" /><path d="M14 .5v6H8z" fill="#4f5357" stroke="none" /></svg>
      </NavIcon>
      <Omnibox>
        <svg width="10" height="13" viewBox="0 0 10 13"><rect y="4.500" width="10" height="8" rx="1" fill="#5f6368" /><path d="M2.500 5V3a2.500 2.200 0 0 1 5 0v2" fill="none" stroke="#5f6368" strokeWidth="1.400" /></svg>
        <Url><Host>bilibili.com</Host>/video/BV1Kb411W75N?p=176</Url>
        <svg width="16" height="15" viewBox="0 0 16 15" fill="none" stroke="#5f6368" strokeWidth="1.300"><path d="M8 1.300l1.900 4.300 4.700.4-3.600 3.100 1.100 4.600L8 11.200l-4.100 2.500L5 9.100 1.400 6l4.700-.4z" /></svg>
      </Omnibox>
      <NavIcon w={45}>
        <svg width="17" height="17" viewBox="0 0 24 24" fill="#5f6368"><path d="M20.500 11H19V7c0-1.100-.9-2-2-2h-4V3.500a2.500 2.500 0 0 0-5 0V5H4c-1.100 0-2 .9-2 2v3.800h1.500a2.700 2.700 0 0 1 0 5.400H2V20c0 1.100.9 2 2 2h3.800v-1.500a2.700 2.700 0 0 1 5.400 0V22H17c1.100 0 2-.9 2-2v-4h1.500a2.500 2.500 0 0 0 0-5z" /></svg>
      </NavIcon>
      <NavIcon w={18}>
        <svg width="17" height="14" viewBox="0 0 17 14" fill="none" stroke="#5f6368" strokeWidth="1.500"><path d="M0 2h10.500M0 5.500h10.500M0 9h7M13.500 11V2H17" /><circle cx="11.800" cy="11" r="2" fill="#5f6368" stroke="none" /></svg>
      </NavIcon>
      <NavIcon w={46}>
        <svg width="22" height="22" viewBox="0 0 22 22"><circle cx="11" cy="11" r="11" fill="#5f6368" /><circle cx="11" cy="7.500" r="3.400" fill="#fff" /><path d="M4 16q2.500-3.600 7-3.600t7 3.600q-2.500 3.400-7 3.400T4 16z" fill="#fff" /></svg>
      </NavIcon>
      <NavIcon w={19}>
        <svg width="4" height="14" fill="#5f6368"><circle cx="2" cy="2" r="1.600" /><circle cx="2" cy="7" r="1.600" /><circle cx="2" cy="12" r="1.600" /></svg>
      </NavIcon>
    </NavBar>
    <Bookmarks>
      <Bookmark w={63} gap={10}><Apps />应用</Bookmark>
      <Bookmark w={154} gap={8} ls={0.15}><BiliTv size={16} />哔哩哔哩 (゜-゜)つ...</Bookmark>
      <Bookmark w={154} gap={8} ls={0.1}><Tile bg="#2579e8">译</Tile>百度翻译-200种语...</Bookmark>
      <Bookmark w={154} gap={8} ls={0.18}><Gitee />我的工作台 - Gitee...</Bookmark>
      <Bookmark w={155} gap={8} ls={0.1}><Tile bg="#2f8ee0" size={12}>L</Tile>应用 Keys · 设置 ·...</Bookmark>
      <Bookmark w={123} gap={7}><Tile bg="transparent" fg="#000" size={12}><b>辰</b></Tile>辰风凌云的博客</Bookmark>
      <Bookmark w={154} gap={7} ls={0.28}><Tile bg="#dedede" fg="#333" size={12} serif>H</Tile>Awesome Wallpa...</Bookmark>
      <Bookmark w={155} gap={8} ls={0.2}><WideMark />WallpapersWide.c...</Bookmark>
      <Bookmark w={153} gap={9}><Paw />普通收录_加快网站...</Bookmark>
      <Bookmark w={130} gap={7}><BlackFigure />博客图片调用网站</Bookmark>
    </Bookmarks>
  </>
);

const ExplorerTop = () => (
  <>
    <TitleArea>
      <BlackStrip />
      <CaptionButton x={1537} w={40}>
        <svg width="14" height="7"><rect x=".5" y=".5" width="13" height="5.500" rx="1" fill="#fff" stroke="#5a6a7d" /></svg>
      </CaptionButton>
      <CaptionButton x={1580} w={40}>
        <svg width="16" height="14" fill="#f4f7fa" stroke="#4b5a6c" strokeWidth="1.200"><path d="M5.500.7h9.500v8H5.500zM8.500 3.500h3.500v2H8.500z" fillRule="evenodd" /><path d="M1 5h9v8H1zM4 8h3v2H4z" fillRule="evenodd" /></svg>
      </CaptionButton>
      <RedEdge />
      <NavButtons>
        <IconCell w={36}><BackIcon /></IconCell>
        <IconCell w={39}><ForwardIcon /></IconCell>
        <Down c="#2d5f96" s={7} />
      </NavButtons>
      <AddressBox>
        <IconCell w={31}><FolderIcon w={17} h={21} /></IconCell>
        <IconCell w={18}><CrumbArrow /></IconCell>
        {crumbs.map((c) => (
          <Crumb key={c.label} w={c.w} ls={c.ls}>{withColon(c.label)}<CrumbArrow /></Crumb>
        ))}
        <IconCell w={275} />
        <Down c="#0a1550" />
        <RefreshBox>
          <svg width="20" height="18" viewBox="0 0 20 18" fill="none" strokeWidth="2.600"><path d="M9 1Q5 2 5 8" stroke="#58a4de" /><path d="M0 6.500h9.500L5 12z" fill="#3c8cd2" /><path d="M11 17q4-1 4-7" stroke="#2e6db8" /><path d="M10 11h9.500L15 5.500z" fill="#2a68b4" /></svg>
        </RefreshBox>
      </AddressBox>
      <SearchBox>
        {withColon("搜索 第2部分：Java高级编程")}
        <svg width="17" height="17" viewBox="0 0 17 17" fill="none"><path d="M1 16l6-6" stroke="#33609f" strokeWidth="2.800" /><circle cx="10.500" cy="6" r="4.700" fill="#e2f1fc" stroke="#3b86cc" strokeWidth="2" /></svg>
      </SearchBox>
    </TitleArea>
    <MenuBar>
      <Cell w={70}>文件(F)</Cell>
      <Cell w={72} ls={0.1}>编辑(E)</Cell>
      <Cell w={73} ls={0.1}>查看(V)</Cell>
      <Cell w={71} ls={0.1}>工具(T)</Cell>
      <Cell w={80} ls={0.2}>帮助(H)</Cell>
    </MenuBar>
    <ToolBar>
      <ToolItem w={89}>组织<Down /></ToolItem>
      <ToolItem w={135}>包含到库中<Down /></ToolItem>
      <ToolItem w={88}>共享<Down /></ToolItem>
      <ToolItem w={1172}>新建文件夹</ToolItem>
      <IconCell w={33}>
        <svg width="20" height="17" viewBox="0 0 20 17" fill="none" stroke="#6a7683"><path d="M1 1h4v4H1zM1 6.500h4v4H1zM1 12h4v4H1z" /><path d="M8 3h12M8 8.500h12M8 14h12" strokeWidth="1.300" strokeDasharray="5 1.500" /></svg>
      </IconCell>
      <IconCell w={39}><Down /></IconCell>
      <IconCell w={46}>
        <svg width="21" height="18" viewBox="0 0 21 18"><rect x=".7" y=".7" width="19.600" height="16.600" fill="#fbfdfe" stroke="#6b7f92" strokeWidth="1.400" /><path d="M1 3.500h12" stroke="#9fb0c0" /><rect x="13" y="1.500" width="6.500" height="15" fill="#6db7dd" stroke="#4d8cb5" /></svg>
      </IconCell>
      <svg width="21" height="21" viewBox="0 0 21 21"><circle cx="10.500" cy="10.500" r="9.500" fill="#2547a8" stroke="#7f93b4" strokeWidth="1.800" /><path d="M7.400 8.200q0-2.800 3.100-2.800t3.100 2.500q0 1.400-1.600 2.200-1.400.8-1.400 2.200M10.500 14v2" fill="none" stroke="#fff" strokeWidth="2" /></svg>
    </ToolBar>
  </>
);

const ExplorerBody = () => (
  <Body>
    <Tree>
      {tree.map((n, i) => (
        <TreeRow key={i} level={n.level} selected={n.selected} ls={n.ls}>
          {n.icon && <TreeIcon>{n.icon}</TreeIcon>}
          {n.label}
        </TreeRow>
      ))}
    </Tree>
    <ScrollTrack>
      <ScrollEnd h={97} top={10}><Up c="#4a4d50" /></ScrollEnd>
      <Thumb><Grip /><Grip /><Grip /></Thumb>
      <ScrollEnd h={72} top={59}><Down c="#4a4d50" s={5} /></ScrollEnd>
    </ScrollTrack>
    <Files>
      <HeaderRow>
        <SortMark><Up c="#6f9cc4" /></SortMark>
        <HeadCell w={653} pad={16}>名称</HeadCell>
        <HeadCell w={156} pad={8}>修改日期</HeadCell>
        <HeadCell w={156} pad={8}>类型</HeadCell>
        <HeadCell w={105} pad={8}>大小</HeadCell>
      </HeaderRow>
      {files.map(([name, date, ls]) => (
        <FileRow key={name}>
          <IconCell w={25}><FolderIcon /></IconCell>
          <FileName ls={ls}>{name}</FileName>
          <FileMeta w={156} ls={0.28}>{date}</FileMeta>
          <FileMeta w={100}>文件夹</FileMeta>
        </FileRow>
      ))}
    </Files>
  </Body>
);

const SevenTaskbar = () => (
  <SevenBar>
    <QuickLaunch>
      <OrbSlot><Orb /></OrbSlot>
      <IconCell w={59}><RedG /></IconCell>
      <IconCell w={60}><Pinwheel /></IconCell>
      <Chrome s={20} />
    </QuickLaunch>
    <TaskButton w={208}><ComputerIcon />计算机</TaskButton>
    <TaskButton w={208} light gap={3} ls={0.35}><FolderIcon w={20} h={23} />{withColon("第2部分：Java高级...")}</TaskButton>
    <TaskButton w={207} gap={3} ls={0.68}><Gear />workspace0105 - J...</TaskButton>
    <TaskButton w={208} ls={0.5}><Recorder />Recording...</TaskButton>
    <Tray>
      <Cell w={33}>api</Cell>
      <IconCell w={32}><HelpNote /></IconCell>
      <ClippedLabel w={43}>《Java</ClippedLabel>
      <Cell w={3} />
      <Chevron w={26}>»</Chevron>
      <IconCell w={43}><Keyboard /></IconCell>
      <IconCell w={28}><Up c="#f2f5f8" /></IconCell>
      <IconCell w={33}><PeopleIcon /></IconCell>
      <IconCell w={28}><Speaker /></IconCell>
      <IconCell w={32}><GreenPlus /></IconCell>
      <IconCell w={32}><Octagon /></IconCell>
      <IconCell w={30}><NetWarn /></IconCell>
      <IconCell w={31}><Battery /></IconCell>
      <IconCell w={51}><Blocked /></IconCell>
      <Cell ls={0.1}>上午 9:40</Cell>
    </Tray>
    <ShowDesktop />
  </SevenBar>
);

const TenTaskbar = () => (
  <TenBar>
    <TenApp w={48}>
      <svg width="16" height="16" viewBox="0 0 16 16"><path d="M0 2.300L6.500 1.400v6.200H0zM7.300 1.300L16 0v7.600H7.300zM0 8.400h6.500v6.200L0 13.700zM7.300 8.400H16V16l-8.700-1.300z" fill="#000" /></svg>
    </TenApp>
    <TenApp w={48}>
      <svg width="17" height="16" viewBox="0 0 17 16" fill="none" stroke="#111" strokeWidth="1.200"><path d="M.6 0v3h11V0M.6 16v-3h11v3M.6 4.500h11v7H.6zM15.500 0v3M15.500 9v7" /><rect x="14.300" y="4.500" width="2.500" height="2.500" fill="#111" /></svg>
    </TenApp>
    <TenApp w={53}>
      <svg width="23" height="24" viewBox="0 0 23 24"><path d="M6 6V1.500h11V6" fill="none" stroke="#2b2b2b" strokeWidth="2" /><path d="M0 6h23v16q0 2-2 2H2q-2 0-2-2z" fill="#2e2e2f" /><path d="M7 10.500h4v4H7z" fill="#f25022" /><path d="M12 10.500h4v4h-4z" fill="#7fba00" /><path d="M7 15.500h4v4H7z" fill="#00a4ef" /><path d="M12 15.500h4v4h-4z" fill="#ffb900" /></svg>
    </TenApp>
    <TenApp w={45} gap={7}>
      <svg width="21" height="18" viewBox="0 0 21 18"><path d="M0 1q0-1 1-1h7l2 2.500H0z" fill="#d39b1c" /><path d="M0 2.500h20q1 0 1 1V17H0z" fill="#fbd565" /><path d="M4 18v-6q0-2 2-2h9q2 0 2 2v6h-3.500v-4h-6v4z" fill="#3a8fc9" /></svg>
    </TenApp>
    <Running w={40}>
      <svg width="23" height="23" viewBox="0 0 24 24">
        <defs><linearGradient id="fx" x1=".8" x2=".2" y2="1"><stop offset="0" stopColor="#ffd83d" /><stop offset=".45" stopColor="#ff7a2e" /><stop offset="1" stopColor="#e5218c" /></linearGradient></defs>
        <path d="M3 5l2 2 3-4q0 2 1.500 3 2-3 5-5.500 1 3 4 5 1-1 1-2 4 4 4 9A11.500 11.500 0 0 1 .5 13Q.5 8 3 5z" fill="url(#fx)" />
        <circle cx="11.500" cy="12.500" r="5" fill="#7a35d8" />
        <path d="M5 9q5-1 7 2-3-.5-3 2 0 3 5 2-3 4-7 1.500T5 9z" fill="#ff9a35" />
      </svg>
    </Running>
    <Running w={48} active><Chrome s={22} /></Running>
    <Running w={40}>
      <svg width="25" height="22" viewBox="0 0 25 22"><circle cx="11" cy="11" r="10.800" fill="#f59a2f" /><circle cx="14" cy="11" r="10.800" fill="#2c2255" /><path d="M3.500 8.500h21M3 11.200h22M3.500 13.900h21" stroke="#f2f0f8" strokeWidth="1.400" /></svg>
    </Running>
    <TenTray>
      <IconCell w={24}>
        <svg width="16" height="16" viewBox="0 0 16 16"><rect width="16" height="16" fill="#111" /><path d="M3 8q3-4 6-2.500T10 10q-2 1-3-1M3 8q2 4 6 4 3-.5 4-2M7 4h6v7" fill="none" stroke="#76b900" strokeWidth="1.200" /></svg>
      </IconCell>
      <IconCell w={23}>
        <svg width="17" height="15" viewBox="0 0 17 15" fill="none" stroke="#111" strokeWidth="1.200"><path d="M5 2.500h11.300v8H4.500V7M10 10.500V14M6.500 14.300h7" /><path d="M1 1h3.500v4H1zM2.700 5v5" /></svg>
      </IconCell>
      <IconCell w={25}><Speaker dark /></IconCell>
      <ImeLabel>中</ImeLabel>
      <Clock><TimeLine>11:48</TimeLine><DateLine>2021/2/6</DateLine></Clock>
      <Notice>
        <svg width="26" height="26" viewBox="0 0 26 26">
          <path d="M0 1h17v14H7.500L4 18.500V15H0z" fill="#101010" />
          <path d="M3 5h11M3 8h11M3 11h7" stroke="#e3e6ec" strokeWidth="1.200" />
          <circle cx="16" cy="17.500" r="8.500" fill="#d4d7de" stroke="#7d8087" />
          <text x="16" y="22" fontSize="12" fontWeight="600" textAnchor="middle" fill="#111">3</text>
        </svg>
      </Notice>
      <PeekLine />
    </TenTray>
  </TenBar>
);

export default function App() {
  return (
    <Screen>
      <GlobalStyle />
      <BrowserChrome />
      <Stage>
        <Desktop>
          <ExplorerTop />
          <ExplorerBody />
          <Details>
            <BigFolder />
            <DetailsText>10 个对象</DetailsText>
          </Details>
          <SevenTaskbar />
        </Desktop>
        <Spotlight>
          <svg width="66" height="68" viewBox="0 0 66 68">
            <circle cx="32.300" cy="32.500" r="31.500" fill="#ffee02" />
            <path d="M34 34.500v23l5-4.500 5 12.500 5-2-5-11.500h7.500z" fill="#0a0705" stroke="#fff8c0" strokeWidth=".6" />
          </svg>
        </Spotlight>
        <DownloadBar>
          <DownloadButton>
            <svg width="15" height="14" viewBox="0 0 15 14"><path d="M0 0l15 7L0 14l3-7z" fill="#20a81f" /><path d="M0 0l15 7H3z" fill="#4fd33f" /></svg>
            下载该 视频
          </DownloadButton>
          <MiniButton>?</MiniButton>
          <MiniButton>
            <svg width="9" height="9"><path d="M1 1l7 7M8 1L1 8" stroke="#14235a" strokeWidth="2.200" /></svg>
          </MiniButton>
        </DownloadBar>
        <BiliBadge>
          <svg width="55" height="53" viewBox="0 0 55 53">
            <path d="M15.500 3l5 8M39.500 3l-5 8" stroke="#cbcbcb" strokeWidth="4.600" strokeLinecap="round" />
            <path fillRule="evenodd" d="M12 7.500q15.500-1 31 0 10 .5 11 10.500.8 11.500 0 23-1 9.500-11 10.500-15.500 1-31 0-10-1-11-10.500-.8-11.500 0-23 1-10 11-10.500zM20 22v16q.5 3.500 4 2l13-8q2.500-2 0-4l-13-8q-3.500-1.500-4 2z" fill="#cbcbcb" />
          </svg>
        </BiliBadge>
        <Progress>
          <ProgressPart w={137} c="#1fa3d8" />
          <ProgressPart w={126} c="rgba(200,208,216,.45)" />
        </Progress>
      </Stage>
      <TenTaskbar />
    </Screen>
  );
}
